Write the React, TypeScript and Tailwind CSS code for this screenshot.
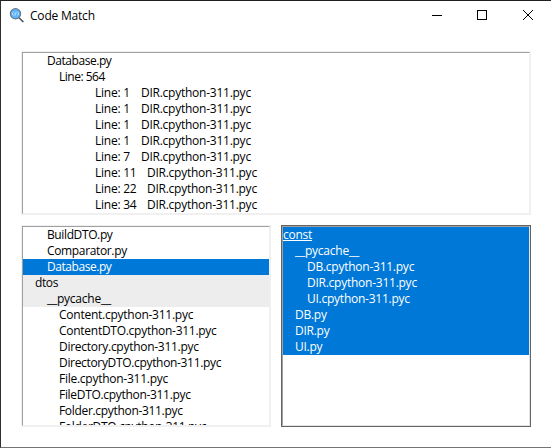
import React from "react";

type Row = { text: string; indent: string; tone?: string; gap?: string; tail?: string; spacing?: string };

const matches: Row[] = [
  { text: "Database.py", indent: "pl-[24px]", spacing: "tracking-[-0.45px]" },
  { text: "Line: 564", indent: "pl-[36px]", spacing: "tracking-[-0.5px]" },
  { text: "Line: 1", indent: "pl-[72px]", gap: "w-[46px]", tail: "DIR.cpython-311.pyc" },
  { text: "Line: 1", indent: "pl-[72px]", gap: "w-[46px]", tail: "DIR.cpython-311.pyc" },
  { text: "Line: 1", indent: "pl-[72px]", gap: "w-[46px]", tail: "DIR.cpython-311.pyc" },
  { text: "Line: 1", indent: "pl-[72px]", gap: "w-[46px]", tail: "DIR.cpython-311.pyc" },
  { text: "Line: 7", indent: "pl-[72px]", gap: "w-[46px]", tail: "DIR.cpython-311.pyc" },
  { text: "Line: 11", indent: "pl-[72px]", gap: "w-[52px]", tail: "DIR.cpython-311.pyc" },
  { text: "Line: 22", indent: "pl-[72px]", gap: "w-[52px]", tail: "DIR.cpython-311.pyc" },
  { text: "Line: 34", indent: "pl-[72px]", gap: "w-[52px]", tail: "DIR.cpython-311.pyc" },
];

const files: Row[] = [
  { text: "BuildDTO.py", indent: "pl-[24px]", spacing: "tracking-[-0.38px]" },
  { text: "Comparator.py", indent: "pl-[24px]", spacing: "tracking-[-0.35px]" },
  { text: "Database.py", indent: "pl-[24px]", tone: "bg-[#0078d7] text-white", spacing: "tracking-[-0.45px]" },
  { text: "dtos", indent: "pl-[12px]", tone: "bg-[#ededed]", spacing: "tracking-[-0.4px]" },
  { text: "__pycache__", indent: "pl-[24px]", tone: "bg-[#ededed]" },
  { text: "Content.cpython-311.pyc", indent: "pl-[36px]", spacing: "tracking-[-0.25px]" },
  { text: "ContentDTO.cpython-311.pyc", indent: "pl-[36px]", spacing: "tracking-[-0.27px]" },
  { text: "Directory.cpython-311.pyc", indent: "pl-[36px]", spacing: "tracking-[-0.28px]" },
  { text: "DirectoryDTO.cpython-311.pyc", indent: "pl-[36px]", spacing: "tracking-[-0.33px]" },
  { text: "File.cpython-311.pyc", indent: "pl-[36px]", spacing: "tracking-[-0.26px]" },
  { text: "FileDTO.cpython-311.pyc", indent: "pl-[36px]", spacing: "tracking-[-0.31px]" },
  { text: "Folder.cpython-311.pyc", indent: "pl-[36px]", spacing: "tracking-[-0.32px]" },
  { text: "FolderDTO.cpython-311.pyc", indent: "pl-[36px]", spacing: "tracking-[-0.32px]" },
];

const blue = "bg-[#0078d7] text-white";
const selected: Row[] = [
  { text: "const", indent: "pl-0", tone: blue + " underline underline-offset-1" },
  { text: "__pycache__", indent: "pl-[12px]", tone: blue },
  { text: "DB.cpython-311.pyc", indent: "pl-[24px]", tone: blue },
  { text: "DIR.cpython-311.pyc", indent: "pl-[24px]", tone: blue },
  { text: "UI.cpython-311.pyc", indent: "pl-[24px]", tone: blue },
  { text: "DB.py", indent: "pl-[12px]", tone: blue },
  { text: "DIR.py", indent: "pl-[12px]", tone: blue },
  { text: "UI.py", indent: "pl-[12px]", tone: blue },
];

function ListBox({ rows, size, focused = false }: { rows: Row[]; size: string; focused?: boolean }) {
  return (
    <div className={`shrink-0 border ${size} ${focused ? "border-[#646464]" : "border-[#f0f0f0]"}`}>
      <div className={`h-full overflow-hidden border border-t-[#a0a0a0] border-l-[#a0a0a0] ${focused ? "border-r-[#e3e3e3] border-b-[#e3e3e3]" : "border-r-[#f0f0f0] border-b-[#f0f0f0]"}`}>
        {rows.map((r, i) => (
          <div key={i} className={`flex h-4 leading-4 whitespace-pre ${r.indent} ${r.tone ?? ""} ${r.spacing ?? "tracking-[-0.25px]"}`}>
            <span className={`shrink-0 ${r.gap ?? ""}`}>{r.text}</span>
            {r.tail && <span>{r.tail}</span>}
          </div>
        ))}
      </div>
    </div>
  );
}

export default function App() {
  return (
    <div className="flex h-[448px] w-[551px] flex-col overflow-hidden border-t border-b border-l border-t-[#202020] border-b-[#747474] border-l-[#303030] bg-white font-['Open_Sans','Noto_Sans',sans-serif] text-[12px] tracking-[-0.2px] text-black">
      <header className="flex h-[30px] shrink-0 items-center">
        <svg className="ml-[8px]" width="16" height="16" viewBox="0 0 16 16" fill="none">
          <path d="M10 9.8 14 13.6" stroke="#4d5966" strokeWidth="1.5" strokeLinecap="round" />
          <circle cx="6.5" cy="5.8" r="5.1" fill="#62b4f8" stroke="#65788a" strokeWidth="1.2" />
          <path d="M4.5 4.4 3 5.8l1.5 1.4M8.5 4.4 10 5.8 8.5 7.2M7.2 4 5.9 7.6" stroke="#d9f0ff" strokeWidth=".8" />
        </svg>
        <h1 className="ml-[5px] grow text-[12px] font-normal">Code Match</h1>
        <svg width="119" height="30" viewBox="0 0 119 30" fill="none" stroke="#000" shapeRendering="crispEdges">
          <path d="M0 14.5h10M45.5 9.5h9v9h-9z" />
          <path d="m91 9 10 10M101 9 91 19" shapeRendering="auto" />
        </svg>
      </header>
      <main className="flex flex-col gap-[10px] pt-[20px] pl-[20px]">
        <ListBox rows={matches} size="h-[164px] w-[510px]" />
        <div className="flex gap-[10px]">
          <ListBox rows={files} size="h-[202px] w-[250px]" />
          <ListBox rows={selected} size="h-[202px] w-[250px]" focused />
        </div>
      </main>
    </div>
  );
}
